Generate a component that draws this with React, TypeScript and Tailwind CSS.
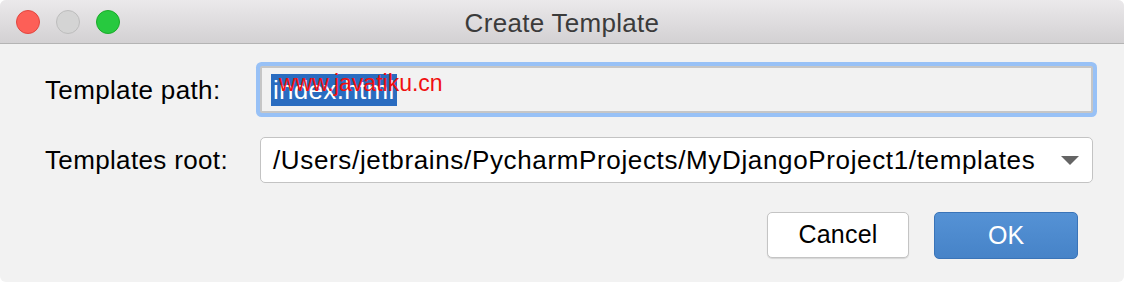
export default function App() {
  return (
    <div className="h-[282px] w-[1124px] bg-white font-['Liberation_Sans',Arial,sans-serif]">
      <div className="flex h-full w-full flex-col overflow-hidden rounded-[6px] bg-[#f2f2f2]">
        {/* title bar */}
        <div className="grid h-[44px] shrink-0 grid-cols-[1fr_auto_1fr] items-center border-b border-[#b4b4b4] bg-gradient-to-b from-[#ebe9eb] to-[#d3d1d3]">
          <div className="flex items-center gap-[16px] pl-[16px]">
            <span className="h-[24px] w-[24px] rounded-full border border-[#e2463f] bg-[#fd5f57]" />
            <span className="h-[24px] w-[24px] rounded-full border border-[#bdbdbd] bg-[#d4d4d4]" />
            <span className="h-[24px] w-[24px] rounded-full border border-[#1aab29] bg-[#27c93f]" />
          </div>
          <div className="pt-[4px] text-[26px] tracking-[0.3px] text-[#3b3b3b]">Create Template</div>
          <div />
        </div>

        {/* form */}
        <div className="grid grid-cols-[215px_833px] gap-y-[24px] pl-[45px] pt-[22px]">
          <label className="self-center pt-[1px] text-[26px] tracking-[0.35px] text-black">Template path:</label>
          <div className="relative flex h-[47px] items-center rounded-[2px] border-2 border-[#c6c6c6] bg-[#f2f2f2] pl-[9px] ring-4 ring-[#98c1f6]">
            <span className="bg-[#2a6cc0] px-[2px] text-[26px] leading-[32px] tracking-[0.3px] text-white">index.html</span>
            <span className="absolute left-[17px] top-[4px] text-[23px] leading-none text-[#f01010]">www.javatiku.cn</span>
          </div>

          <label className="self-center pt-[1px] text-[26px] tracking-[0.35px] text-black">Templates root:</label>
          <div className="flex h-[46px] items-center justify-between rounded-[5px] border border-[#c3c3c3] bg-white pl-[12px] pr-[13px]">
            <span className="text-[26px] tracking-[0.65px] text-black">/Users/jetbrains/PycharmProjects/MyDjangoProject1/templates</span>
            <svg width="18" height="9" viewBox="0 0 18 9">
              <path d="M0 0H18L9 9Z" fill="#646464" />
            </svg>
          </div>
        </div>

        {/* buttons */}
        <div className="flex justify-end gap-[25px] pr-[46px] pt-[29px]">
          <button className="h-[46px] w-[142px] rounded-[5px] border-[1.5px] border-[#c4c4c4] bg-white text-[25px] tracking-[0.2px] text-black shadow-[0_1px_1px_rgba(0,0,0,0.12)]">
            Cancel
          </button>
          <button className="h-[47px] w-[144px] rounded-[5px] border border-[#3a74b8] bg-gradient-to-b from-[#5592d5] to-[#4683c8] text-[25px] text-white">
            OK
          </button>
        </div>
      </div>
    </div>
  );
}
